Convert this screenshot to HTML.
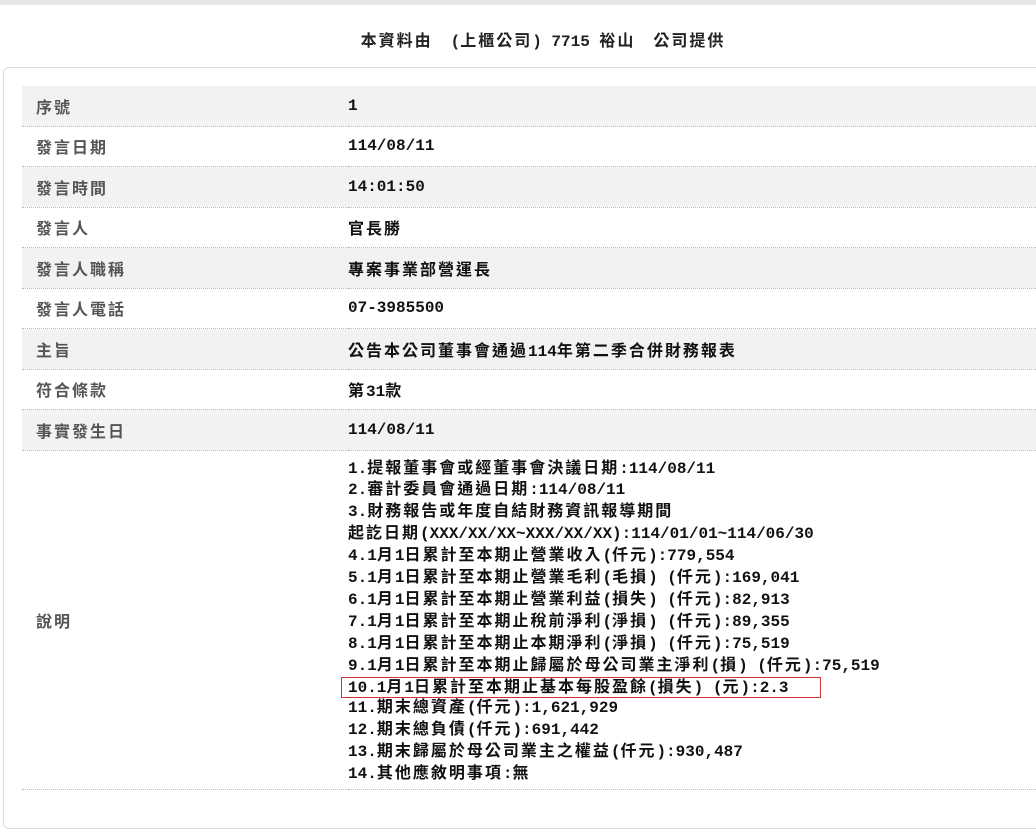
<!DOCTYPE html>
<html><head><meta charset="utf-8"><style>
html,body{margin:0;padding:0;background:#fff;width:1036px;height:811px;overflow:hidden}
body{font-family:"Liberation Sans","Noto Sans CJK TC",sans-serif}
.top{position:absolute;left:0;top:0;width:1036px;height:5px;background:#e6e6e6}
.title{position:absolute;left:0;width:1086px;top:27px;text-align:center;font-weight:bold;font-size:16px;color:#222;font-family:"Liberation Mono","Noto Sans CJK TC",monospace}
.card{position:absolute;left:3px;top:67px;width:1060px;height:760px;border:1px solid #ddd;border-radius:6px}
table{position:absolute;left:22px;top:86px;width:1030px;border-collapse:collapse}
td{height:39.5px;padding:0;border-bottom:1px dotted #bbb;font-size:16px;vertical-align:middle}
td.l{width:312px;padding-left:14px;color:#555;letter-spacing:2px;font-weight:bold;font-family:"Liberation Sans","Noto Sans CJK TC",sans-serif}
td.v{font-weight:bold;color:#111;font-family:"Liberation Mono","Noto Sans CJK TC",monospace}
tr.g td{background:#f2f2f2}
.lines{padding:8px 0 3px;position:relative}
.lines div{height:21.95px;line-height:21.95px;white-space:nowrap;overflow:visible}
.c{letter-spacing:2px}
.lines div.box{width:472px;margin-left:-7px;padding-left:6px;border:1.5px solid #d0333a;height:19px;line-height:20px;margin-top:-0.5px;margin-bottom:-0.5px;box-sizing:content-box}
</style></head><body>
<div class="top"></div>
<div class="title">本資料由　(上櫃公司) 7715 裕山　公司提供</div>
<div class="card"></div>
<table>
<tr class="g"><td class="l">序號</td><td class="v">1</td></tr>
<tr><td class="l">發言日期</td><td class="v">114/08/11</td></tr>
<tr class="g"><td class="l">發言時間</td><td class="v">14:01:50</td></tr>
<tr><td class="l">發言人</td><td class="v">官長勝</td></tr>
<tr class="g"><td class="l">發言人職稱</td><td class="v">專案事業部營運長</td></tr>
<tr><td class="l">發言人電話</td><td class="v">07-3985500</td></tr>
<tr class="g"><td class="l">主旨</td><td class="v">公告本公司董事會通過114年第二季合併財務報表</td></tr>
<tr><td class="l">符合條款</td><td class="v">第31款</td></tr>
<tr class="g"><td class="l">事實發生日</td><td class="v">114/08/11</td></tr>
<tr><td class="l">說明</td><td class="v"><div class="lines">
<div>1.提報董事會或經董事會決議日期:114/08/11</div>
<div>2.審計委員會通過日期:114/08/11</div>
<div>3.財務報告或年度自結財務資訊報導期間</div>
<div>起訖日期(XXX/XX/XX~XXX/XX/XX):114/01/01~114/06/30</div>
<div>4.1月1日累計至本期止營業收入(仟元):779,554</div>
<div>5.1月1日累計至本期止營業毛利(毛損) (仟元):169,041</div>
<div>6.1月1日累計至本期止營業利益(損失) (仟元):82,913</div>
<div>7.1月1日累計至本期止稅前淨利(淨損) (仟元):89,355</div>
<div>8.1月1日累計至本期止本期淨利(淨損) (仟元):75,519</div>
<div>9.1月1日累計至本期止歸屬於母公司業主淨利(損) (仟元):75,519</div>
<div class="box">10.1月1日累計至本期止基本每股盈餘(損失) (元):2.3</div>
<div>11.期末總資產(仟元):1,621,929</div>
<div>12.期末總負債(仟元):691,442</div>
<div>13.期末歸屬於母公司業主之權益(仟元):930,487</div>
<div>14.其他應敘明事項:無</div>
</div></td></tr>
</table>
<script>
(function(){
  var els=document.querySelectorAll('td.v, .title');
  var re=/([\u3000-\u9fff\uff00-\uffef]+)/g;
  els.forEach(function(el){
    var walker=document.createTreeWalker(el,NodeFilter.SHOW_TEXT,null);
    var nodes=[];while(walker.nextNode())nodes.push(walker.currentNode);
    nodes.forEach(function(n){
      if(!re.test(n.nodeValue))return;re.lastIndex=0;
      var s=document.createElement('span');
      s.innerHTML=n.nodeValue.replace(re,'<span class="c">$1</span>');
      n.parentNode.replaceChild(s,n);
    });
  });
})();
</script>
</body></html>
